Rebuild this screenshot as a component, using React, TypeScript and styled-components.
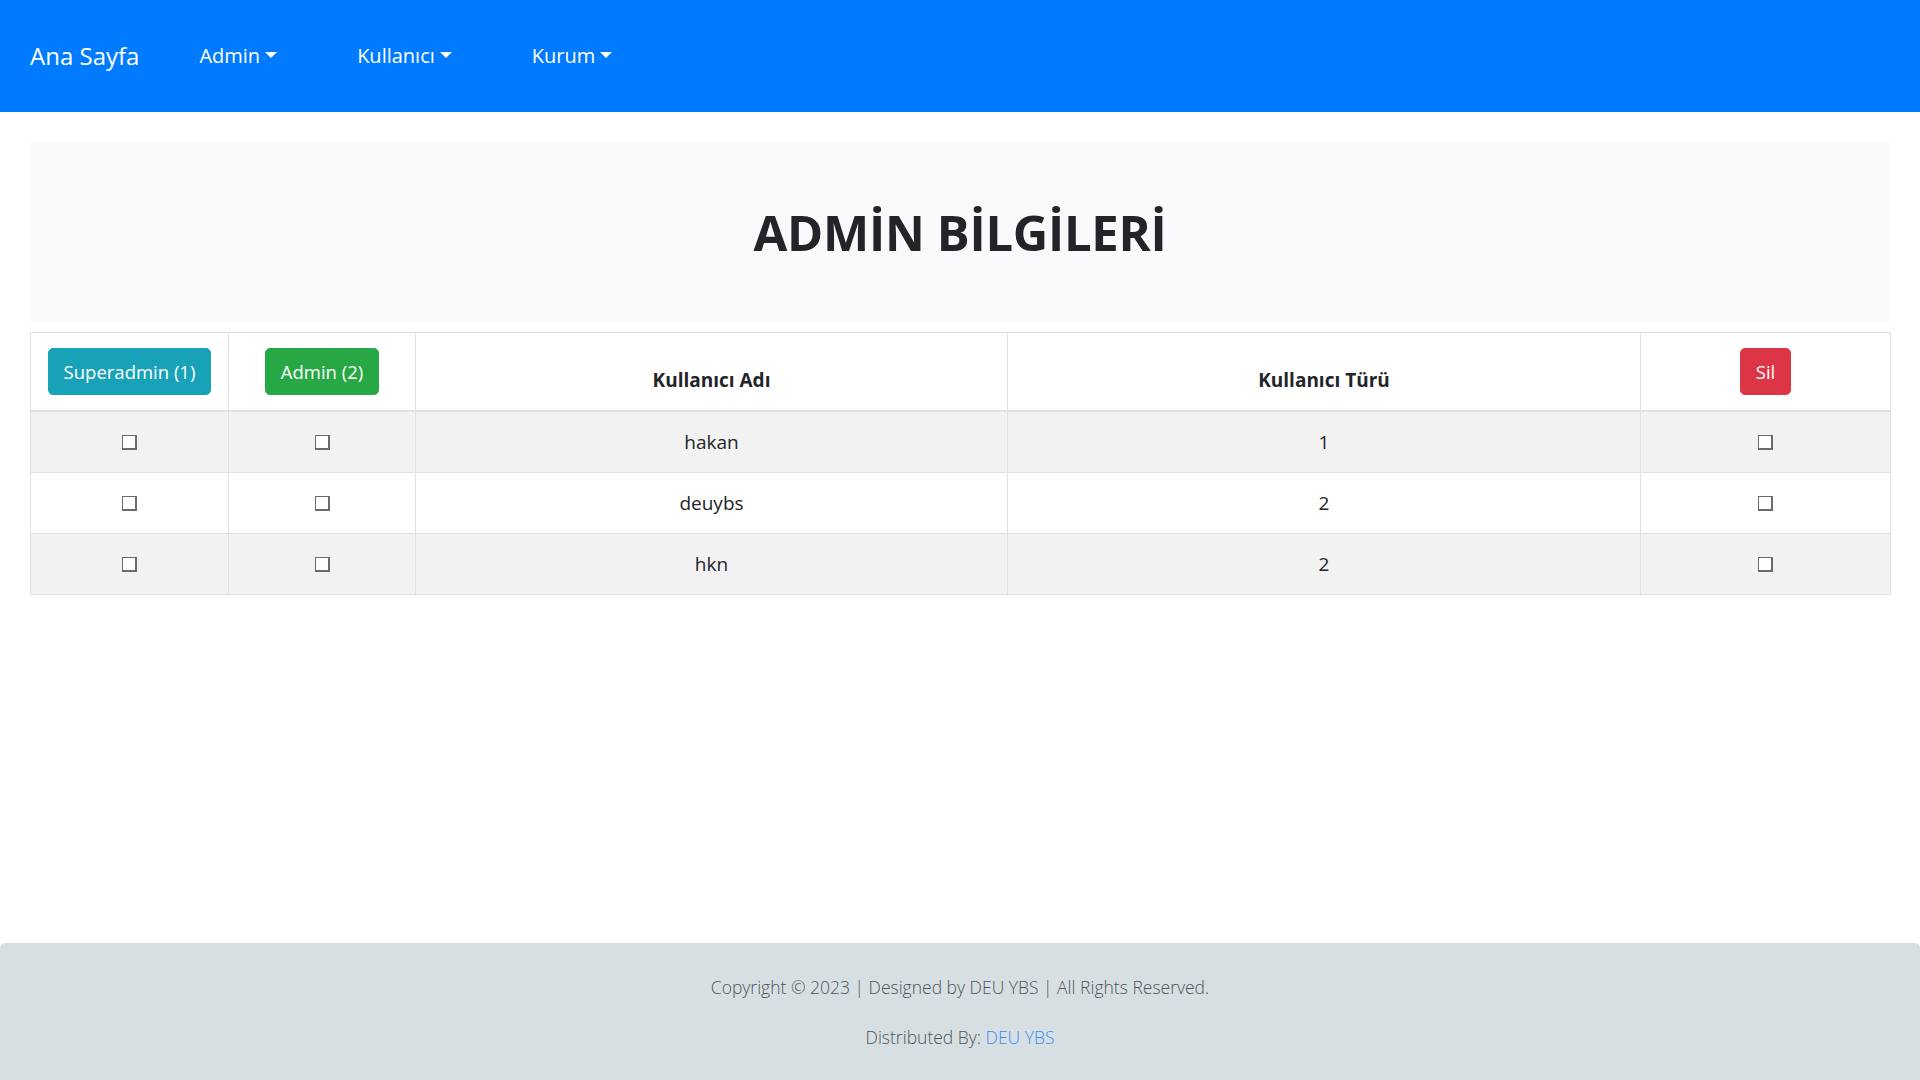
import React from "react";
import styled, { createGlobalStyle } from "styled-components";

const GlobalStyle = createGlobalStyle`
  * { box-sizing: border-box; }
  html, body { margin: 0; padding: 0; }
  body {
    font-family: "Open Sans", "Noto Sans", "Liberation Sans", sans-serif;
    font-size: 19px;
    line-height: 1.5;
    color: #212529;
    background: #ffffff;
  }
`;

const Page = styled.div`
  min-height: 100vh;
  display: flex;
  flex-direction: column;
`;

const Navbar = styled.nav`
  height: 112px;
  background: #007bff;
  display: flex;
  align-items: center;
  padding: 0 30px;
`;

const Brand = styled.a`
  font-size: 24px;
  color: #ffffff;
  margin-right: 20px;
  text-decoration: none;
  line-height: 1.5;
`;

const NavList = styled.ul`
  display: flex;
  list-style: none;
  margin: 0;
  padding: 0;
`;

const NavLink = styled.a`
  display: block;
  padding: 10px 40px;
  color: #ffffff;
  font-size: 20px;
  text-decoration: none;
  &::after {
    content: "";
    display: inline-block;
    margin-left: 5px;
    vertical-align: 5px;
    border-top: 6px solid #ffffff;
    border-left: 6px solid transparent;
    border-right: 6px solid transparent;
  }
`;

const Main = styled.main`
  padding: 30px 30px 0;
`;

const Jumbotron = styled.div`
  background: #f8f9fa;
  height: 180px;
  display: flex;
  align-items: center;
  justify-content: center;
  margin-bottom: 10px;
`;

const Title = styled.h1`
  margin: 0;
  font-size: 49px;
  font-weight: 700;
  color: #212529;
  line-height: 1.2;
  letter-spacing: -0.3px;
`;

const Table = styled.table`
  width: 100%;
  border-collapse: collapse;
  table-layout: fixed;
  border: 1px solid #dee2e6;
`;

const HeadCell = styled.th`
  padding: 15px;
  border: 1px solid #dee2e6;
  border-bottom: 2px solid #dee2e6;
  vertical-align: bottom;
  text-align: center;
  font-weight: 700;
  font-size: 19px;
  line-height: 30px;
  white-space: nowrap;
`;

const Row = styled.tr<{ $striped: boolean }>`
  background: ${(p) => (p.$striped ? "#f2f2f2" : "#ffffff")};
`;

const Cell = styled.td`
  padding: 15px;
  border: 1px solid #dee2e6;
  text-align: center;
  line-height: 30px;
  font-size: 19px;
  vertical-align: top;
`;

const Button = styled.button<{ $bg: string }>`
  background: ${(p) => p.$bg};
  border: 1px solid ${(p) => p.$bg};
  color: #ffffff;
  font-family: inherit;
  font-size: 18.5px;
  line-height: 30px;
  padding: 7.5px 15px;
  border-radius: 5px;
  white-space: nowrap;
  cursor: pointer;
`;

const Check = styled.span`
  display: inline-block;
  width: 15px;
  height: 15px;
  vertical-align: -1px;
  background: #ffffff;
  border-style: solid;
  border-color: #6b6b6b;
  border-width: 1px 2px 2px 1px;
`;

const Footer = styled.footer`
  margin-top: auto;
  background: #d8dfe2;
  border-radius: 5px 5px 0 0;
  height: 137px;
  padding-top: 29px;
  text-align: center;
  font-weight: 300;
  color: #4f555b;
  font-size: 17.5px;
`;

const FooterText = styled.p`
  margin: 0 0 20px;
  line-height: 30px;
`;

const FooterLink = styled.a`
  color: #3b8bf5;
  text-decoration: none;
`;

const rows = [
  { name: "hakan", type: 1 },
  { name: "deuybs", type: 2 },
  { name: "hkn", type: 2 },
];

export default function App() {
  return (
    <Page>
      <GlobalStyle />
      <Navbar>
        <Brand href="#">Ana Sayfa</Brand>
        <NavList>
          <li><NavLink href="#">Admin</NavLink></li>
          <li><NavLink href="#">Kullanıcı</NavLink></li>
          <li><NavLink href="#">Kurum</NavLink></li>
        </NavList>
      </Navbar>
      <Main>
        <Jumbotron>
          <Title>ADMİN BİLGİLERİ</Title>
        </Jumbotron>
        <Table>
          <colgroup>
            <col style={{ width: 198 }} />
            <col style={{ width: 187 }} />
            <col style={{ width: 592 }} />
            <col style={{ width: 633 }} />
            <col style={{ width: 250 }} />
          </colgroup>
          <thead>
            <tr>
              <HeadCell><Button $bg="#17a2b8">Superadmin (1)</Button></HeadCell>
              <HeadCell><Button $bg="#28a745">Admin (2)</Button></HeadCell>
              <HeadCell>Kullanıcı Adı</HeadCell>
              <HeadCell>Kullanıcı Türü</HeadCell>
              <HeadCell><Button $bg="#dc3545">Sil</Button></HeadCell>
            </tr>
          </thead>
          <tbody>
            {rows.map((r, i) => (
              <Row key={r.name} $striped={i % 2 === 0}>
                <Cell><Check /></Cell>
                <Cell><Check /></Cell>
                <Cell>{r.name}</Cell>
                <Cell>{r.type}</Cell>
                <Cell><Check /></Cell>
              </Row>
            ))}
          </tbody>
        </Table>
      </Main>
      <Footer>
        <FooterText>Copyright © 2023 | Designed by DEU YBS | All Rights Reserved.</FooterText>
        <FooterText>
          Distributed By: <FooterLink href="#">DEU YBS</FooterLink>
        </FooterText>
      </Footer>
    </Page>
  );
}
